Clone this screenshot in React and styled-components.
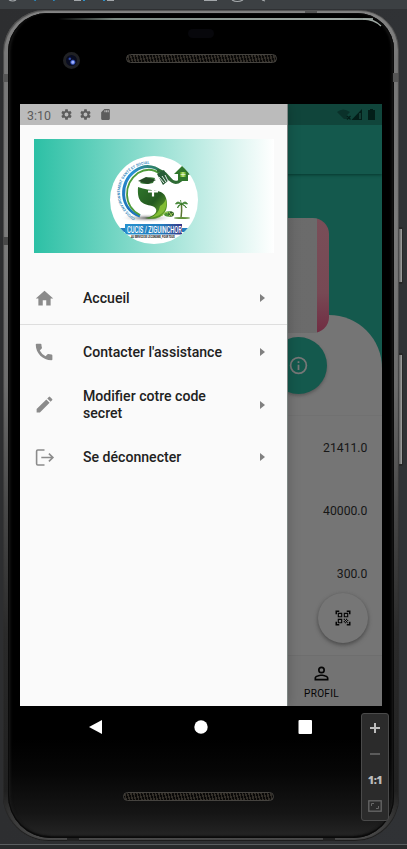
import React from 'react';
import styled, { createGlobalStyle, css } from 'styled-components';

const Global = createGlobalStyle`
  * { box-sizing: border-box; }
  body { margin: 0; background: #303235; font-family: Roboto, sans-serif; }
`;

const Desk = styled.main`
  position: relative;
  width: 407px;
  height: 849px;
  overflow: hidden;
  display: grid;
  grid-template-rows: 9px 835px 5px;
  background: linear-gradient(90deg, #2d2e30, #303235);
`;
const ToolStrip = styled.header`
  background: #3c4043;
  svg { display: block; }
`;
const FootStrip = styled.footer`
  background: #282a2b;
  border-top: 1px solid #5a5e60;
`;
const Stage = styled.div`
  display: flex;
  padding-left: 3px;
`;
const Frame = styled.div`
  width: 396px;
  height: 831px;
  margin-top: 1px;
  padding: 3px 5px 3px 5px;
  border-radius: 42px 40px 44px 46px;
  background: linear-gradient(180deg, #858585 0, #777 6%, #7c7c7c 25%, #6d6d6d 45%, #484848 60%, #2b2b2b 75%, #202020 94%, #4c4c4c 100%);
  box-shadow: inset 1px 1px 1px #30303099, inset 0 -1px 1px #181818, inset -1px 0 1px #30303099;
`;
const Body = styled.div`
  display: grid;
  grid-template-rows: 91px 602px 1fr;
  height: 825px;
  padding: 0 12px;
  border-radius: 39px 37px 41px 43px;
  background: linear-gradient(180deg, #000 0 88%, #060606 92%, #151515 97%, #262626 100%);
  box-shadow: inset 0 0 0 1px #0a0a0a, inset 4px 0 3px -2px #1d1d1d, inset -4px 0 3px -2px #1d1d1d, inset 0 -3px 2px -1px #0a0a0a;
`;
const TopBezel = styled.div`
  position: relative;
  &::before {
    content: '';
    position: absolute;
    top: 5px;
    left: 38px;
    width: 315px;
    height: 2px;
    background: linear-gradient(90deg, transparent, #7e8c85 18%, #a0aaa5 90%, #8a9490);
  }
  > svg { position: absolute; left: 342px; top: 5px; }
`;
const Sensor = styled.i`
  position: absolute;
  left: 168px;
  top: 16px;
  width: 26px;
  height: 9px;
  border-radius: 5px;
  background: #07070b;
`;
const Camera = styled.i`
  position: absolute;
  left: 43px;
  top: 39px;
  width: 17px;
  height: 17px;
  border-radius: 50%;
  border: 3px solid #202124;
  background:
    radial-gradient(circle at 62% 66%, #9fb0ff 0 1px, #3554bd 2px, transparent 3px),
    radial-gradient(circle at 35% 35%, #2d4ab0 0 .6px, transparent 1.8px), #090c20;
`;
const Speaker = styled.i`
  position: absolute;
  left: ${p => p.$x}px;
  top: ${p => p.$y}px;
  width: 151px;
  height: 9px;
  border-radius: 5px;
  border: 1px solid #45433f;
  background: repeating-linear-gradient(75deg, #0a0908 0 1.5px, #332f29 1.5px 3px);
`;
const Screen = styled.section`
  position: relative;
  width: 362px;
  height: 602px;
  overflow: hidden;
  background: #14594d;
`;
const AppBar = styled.div`
  height: 70px;
  border-top: 21px solid #10453b;
  box-shadow: 0 1px 3px #06372d;
`;
const CardZone = styled.div`
  display: flex;
  justify-content: flex-end;
  height: 141px;
  padding: 44px 53px 0 0;
`;
const BankCard = styled.div`
  z-index: 1;
  flex: none;
  width: 245px;
  height: 115px;
  border-radius: 16px;
  background: linear-gradient(90deg, #686868 0, #6b6b6b 233px, transparent 233px), linear-gradient(#794e58, #774954 65%, #712c42);
`;
const Sheet = styled.div`
  height: 391px;
  display: grid;
  grid-template-rows: 100px 190px 50px 51px;
  border-radius: 0 53px 0 0;
  background: #757575;
`;
const InfoButton = styled.div`
  justify-self: start;
  display: grid;
  place-items: center;
  width: 57px;
  height: 57px;
  margin: 22px 0 0 250px;
  border-radius: 50%;
  color: #777;
  background: #14594d;
  box-shadow: 0 2px 3px #4448;
`;
const Amounts = styled.div`
  display: grid;
  grid-auto-rows: 63.3px;
  align-items: center;
  justify-items: end;
  padding-right: 14.6px;
  border-top: 1px solid #717171;
  color: #171717;
  font-size: 12.2px;
`;
const FabZone = styled.div`
  display: flex;
  justify-content: flex-end;
  padding-right: 14px;
`;
const Fab = styled.div`
  display: grid;
  place-items: center;
  width: 50px;
  height: 50px;
  margin-top: -12px;
  border-radius: 50%;
  background: #767676;
  box-shadow: 0 2px 4px #4a4a4a, 0 0 2px #6668;
  color: #050505;
`;
const BottomNav = styled.nav`
  display: flex;
  justify-content: flex-end;
  background: #737373;
  border-top: 1px solid #6e6e6e;
`;
const NavItem = styled.div`
  display: flex;
  flex-direction: column;
  align-items: center;
  width: 121px;
  padding-top: 7px;
  color: #050505;
  font-size: 10px;
  line-height: 13px;
  letter-spacing: .3px;
  svg { margin-bottom: 3px; }
`;
const StatusIcons = styled.div`
  position: absolute;
  left: 316px;
  top: 3px;
`;
const Drawer = styled.aside`
  position: absolute;
  z-index: 2;
  inset: 0 auto 0 0;
  width: 267px;
  background: #fafafa;
  box-shadow: 1px 0 0 #7d8583, 0 0 12px #0004;
`;
const StatusBar = styled.div`
  display: flex;
  align-items: center;
  height: 21px;
  padding: 1px 0 0 7px;
  background: #bbb;
  color: #5c5c5c;
  font-size: 12.4px;
  svg { margin: 0 0 1px 6.5px; }
  svg:first-of-type { margin-left: 9px; }
`;
const Banner = styled.div`
  display: grid;
  place-items: center;
  height: 114px;
  margin: 14px 13px 18px 14px;
  padding-top: 7px;
  background: linear-gradient(90deg, #2cc0a5, #fff);
`;
const MenuRow = styled.div`
  display: grid;
  grid-template-columns: 49px 144px 1fr;
  align-items: center;
  height: 52.8px;
  padding: 0 14px;
  color: #8b8b8b;
  ${p => p.$divided && css`border-bottom: 1px solid #dedede; height: 54.4px; padding-top: 1px;`}
`;
const Label = styled.span`
  color: #212121;
  font-size: 14.1px;
  font-weight: 500;
  line-height: 16.5px;
`;
const Arrow = styled.i`
  justify-self: end;
  margin-right: 8px;
  border: solid transparent;
  border-width: 4.3px 0 4.3px 5px;
  border-left-color: #808080;
`;
const BottomBezel = styled.div`
  position: relative;
  > svg { position: absolute; left: 68px; top: 13px; }
`;
const SideButton = styled.i`
  position: absolute;
  left: 399px;
  top: ${p => p.$y}px;
  width: 4px;
  height: ${p => p.$h}px;
  border: solid #282828;
  border-width: 2px 1px 2px 0;
  border-radius: 0 2px 2px 0;
  background: linear-gradient(90deg, #5b5b5b, #a5a5a5);
`;
const Seam = styled.i`
  position: absolute;
  left: ${p => p.$x}px;
  top: ${p => p.$y}px;
  width: ${p => p.$w}px;
  height: ${p => p.$h}px;
  background: ${p => p.$c || '#555'};
`;
const ZoomPanel = styled.div`
  position: absolute;
  z-index: 3;
  left: 361px;
  top: 713px;
  width: 28px;
  height: 108px;
  display: grid;
  grid-template-rows: 28px 24px 27px 25px;
  place-items: center;
  border: 1px solid #4a4a4a;
  border-radius: 3px;
  background: #2b2b2b;
  color: #bcbcbc;
  font: 800 11px "Open Sans", sans-serif;
  letter-spacing: -.5px;
`;

const paths = {
  home: 'M10 20v-6h4v6h5v-8h3L12 3 2 12h3v8z',
  phone: 'M20 15.5c-1.25 0-2.45-.2-3.57-.57a1.02 1.02 0 0 0-1.02.24l-2.2 2.2a15.07 15.07 0 0 1-6.59-6.59l2.2-2.2a1 1 0 0 0 .25-1.02A11.4 11.4 0 0 1 8.5 4c0-.55-.45-1-1-1H3c-.55 0-1 .45-1 1 0 9.94 8.06 18 18 18 .55 0 1-.45 1-1v-4.5c0-.55-.45-1-1-1z',
  edit: 'M3 17.25V21h3.75L17.81 9.94l-3.75-3.75zM20.71 7.04a1 1 0 0 0 0-1.41l-2.34-2.34a1 1 0 0 0-1.41 0l-1.83 1.83 3.75 3.75z',
  gear: 'M19.14 12.94c.04-.3.06-.61.06-.94s-.02-.64-.07-.94l2.03-1.58a.49.49 0 0 0 .12-.61l-1.92-3.32a.49.49 0 0 0-.59-.22l-2.39.96a7 7 0 0 0-1.62-.94l-.36-2.54a.48.48 0 0 0-.48-.41h-3.84a.48.48 0 0 0-.47.41l-.36 2.54c-.59.24-1.13.57-1.62.94l-2.39-.96a.48.48 0 0 0-.59.22L2.74 8.87a.48.48 0 0 0 .12.61l2.03 1.58A6 6 0 0 0 4.8 12c0 .31.02.64.07.94l-2.03 1.58a.49.49 0 0 0-.12.61l1.92 3.32c.12.22.37.29.59.22l2.39-.96c.5.38 1.03.7 1.62.94l.36 2.54c.05.24.24.41.48.41h3.84c.24 0 .44-.17.47-.41l.36-2.54a7 7 0 0 0 1.62-.94l2.39.96c.22.08.47 0 .59-.22l1.92-3.32a.49.49 0 0 0-.12-.61zM12 15.6A3.6 3.6 0 1 1 12 8.4a3.6 3.6 0 0 1 0 7.2z',
  sd: 'M18 2h-8L4 8v12c0 1.1.9 2 2 2h12c1.1 0 2-.9 2-2V4c0-1.1-.9-2-2-2zm-6 6h-2V4h2zm3 0h-2V4h2zm3 0h-2V4h2z',
  info: 'M11 7h2v2h-2zm0 4h2v6h-2zm1-9a10 10 0 1 0 0 20 10 10 0 0 0 0-20zm0 18a8 8 0 1 1 0-16 8 8 0 0 1 0 16z',
  person: 'M12 5.9a2.1 2.1 0 1 1 0 4.2 2.1 2.1 0 0 1 0-4.2m0 9c2.97 0 6.1 1.46 6.1 2.1v1.1H5.9V17c0-.64 3.13-2.1 6.1-2.1M12 4a4 4 0 1 0 0 8 4 4 0 0 0 0-8zm0 9c-2.67 0-8 1.34-8 4v3h16v-3c0-2.66-5.33-4-8-4z',
  qr: 'M9.5 6.5v3h-3v-3zM11 5H5v6h6zm-1.5 9.5v3h-3v-3zM11 13H5v6h6zm6.5-6.5v3h-3v-3zM19 5h-6v6h6zm-6 8h1.5v1.5H13zm1.5 1.5H16V16h-1.5zM16 13h1.5v1.5H16zm-3 3h1.5v1.5H13zm1.5 1.5H16V19h-1.5zM16 16h1.5v1.5H16zm1.5-1.5H19V16h-1.5zm0 3H19V19h-1.5zM22 7h-2V4h-3V2h5zm0 15v-5h-2v3h-3v2zM2 22h5v-2H4v-3H2zM2 2v5h2V4h3V2z',
};

function Icon({ name, size = 21 }) {
  return <svg width={size} height={size} viewBox="0 0 24 24" fill="currentColor" fillRule="evenodd"><path d={paths[name]} /></svg>;
}
function LogoutIcon() {
  return <svg width="21" height="21" viewBox="0 0 21 21" fill="none" stroke="currentColor" strokeWidth="1.6"><path d="M10.5 3H3.8q-1.2 0-1.2 1.2v12.6q0 1.2 1.2 1.2h6.7M7.3 10.5h11.3M14.9 6.6l4 3.9-4 3.9" /></svg>;
}

function Logo() {
  return (
    <svg width="90" height="90" viewBox="0 0 90 90">
      <defs>
        <linearGradient id="leaf" x2="1" y2="1"><stop stopColor="#2f762b" /><stop offset=".5" stopColor="#245a20" /><stop offset="1" stopColor="#77b82d" /></linearGradient>
        <linearGradient id="ring" x1="1" x2=".1" y2="1"><stop stopColor="#2f7a43" /><stop offset=".45" stopColor="#2a92d6" /><stop offset="1" stopColor="#1c6fb5" /></linearGradient>
        <linearGradient id="plate"><stop stopColor="#2891cf" /><stop offset=".65" stopColor="#227bbb" /><stop offset="1" stopColor="#363485" /></linearGradient>
        <radialGradient id="ground"><stop stopColor="#666" /><stop offset="1" stopColor="#fff" stopOpacity="0" /></radialGradient>
        <clipPath id="disc"><circle cx="45" cy="45" r="44" /></clipPath>
        <path id="orbit" d="M27 64C4 49 8 24 24 14Q35 6 54 9.5" />
      </defs>
      <circle cx="45" cy="45" r="44" fill="#fff" />
      <g clipPath="url(#disc)">
        <ellipse cx="38" cy="63" rx="27" ry="4.5" fill="url(#ground)" />
        <path d="M31 61C10 54 10 27 26 16C37 8 49 12 54 19" fill="none" stroke="url(#ring)" strokeWidth="3" />
        <path d="M31 60C14 51 14 29 29 18Q41 11 51 19" fill="none" stroke="#4f9c3a" strokeWidth="1.8" />
        <path d="M29 32C28 47 33 49 43 51C50 53 49 61 36 63C53 67 61 56 57 43C54 33 42 37 29 32Z" fill="url(#leaf)" />
        <path d="M57 44Q60 60 41 63Q50 59 51 51Q55 49 57 44Z" fill="#82bd35" />
        <path d="M31 28Q36 20 46 23L44 28Q37 30 31 28Z" fill="#367735" />
        <path d="M29 26l8-4 10 3-8 4z" fill="#244b25" />
        <path d="M39 36.500h10M44 31.500v10" stroke="#fff" strokeWidth="2.2" />
        <path d="M48 16C58 14 60 30 69 27Q76 24 74 17" fill="none" stroke="#2f6b35" strokeWidth="3.2" />
        <path d="M48 19l7-4 5 10-6 5z" fill="#285c37" />
        <path d="M50 22l5 6m-2-7l4 6m-1-7l3 6" stroke="#fff" strokeWidth=".9" />
        <path d="M65 19l9-9 8 9-3 1v6h-10v-7z" fill="#2f762b" />
        <path d="M71.5 17h5v5h-5z" fill="#8bc63c" /><path d="M74 17v5M71.5 19.5h5" stroke="#fff" strokeWidth=".6" />
        <ellipse cx="60" cy="59" rx="5" ry="2.8" fill="#4e9735" /><circle cx="62" cy="59" r="2.6" fill="#315b2d" />
        <path d="M53 61q3-5 6-3m1-1l3 4m-3 0l4-3" stroke="#a5d05c" fill="none" />
        <path d="M72 63q1-7 .5-14" fill="none" stroke="#5b7632" strokeWidth="1.5" />
        <path d="M72.5 49q-4-4-6 0q3-1 6 0q-4 1-4 4q2-3 4-4q4-4 6 0q-3-1-6 0q4 1 5 4q-2-3-5-4q-1-3-1-4" fill="#4b9639" stroke="#397a2b" strokeWidth=".8" />
        <ellipse cx="73" cy="63" rx="8" ry="1" fill="#62933c" />
        <path d="M10 73h8v4h-8M70 73h9v4h-9" fill="#247ebd" />
        <rect x="16" y="69" width="57" height="10.5" fill="url(#plate)" />
      </g>
      <text fill="#368bc0" fontFamily="Roboto" fontSize="3.7" fontWeight="700"><textPath href="#orbit" startOffset="1" textLength="77">CUCIS ENVIRONNEMENT SANTÉ ET SOCIAL</textPath></text>
      <text transform="translate(18 77.8) scale(.62 1)" fill="#fff" fontFamily="Roboto" fontSize="9.2" fontWeight="500">CUCIS / ZIGUINCHOR</text>
      <text transform="translate(22 83) scale(.64 1)" fill="#111" fontFamily="Roboto" fontSize="3.6" fontWeight="800">AU SERVICE DE L'ÉCONOMIE, POUR TOUS</text>
    </svg>
  );
}

const menu = [
  { label: 'Accueil', icon: <Icon name="home" />, divided: true },
  { label: "Contacter l'assistance", icon: <Icon name="phone" /> },
  { label: 'Modifier cotre code secret', icon: <Icon name="edit" /> },
  { label: 'Se déconnecter', icon: <LogoutIcon /> },
];

export default function App() {
  return (
    <>
      <Global />
      <Desk>
        <ToolStrip>
          <svg width="407" height="9" fill="none">
            <path d="M9 0q4 2 7 0M74 .5h7M107 .5h7M204 .5h13M232 0q5 3 11 0M262 0l3 1" stroke="#a3a7aa" strokeWidth="1.2" />
            <path d="M34 0l2 .5m17 0l2-.5M83 .5h2M103 .5h2" stroke="#2b91c9" strokeWidth="1.2" />
          </svg>
        </ToolStrip>
        <Stage>
          <Frame>
            <Body>
              <TopBezel>
                <Sensor /><Camera /><Speaker $x={106} $y={41} />
                <svg width="24" height="12" fill="none" stroke="#a0aaa5" strokeWidth="1.3"><path d="M1 1Q12 1 19 8" /></svg>
              </TopBezel>
              <Screen>
                <AppBar />
                <CardZone><BankCard /></CardZone>
                <Sheet>
                  <InfoButton><Icon name="info" /></InfoButton>
                  <Amounts><span>21411.0</span><span>40000.0</span><span>300.0</span></Amounts>
                  <FabZone><Fab><Icon name="qr" size={18} /></Fab></FabZone>
                  <BottomNav><NavItem><Icon name="person" size={21} />PROFIL</NavItem></BottomNav>
                </Sheet>
                <StatusIcons>
                  <svg width="44" height="15" fill="#031e19">
                    <path d="M1 5q6-5 13 0l-3 3v4H8z" opacity=".5" /><path d="M11 9l3.5 3.5m0-3.5L11 12.5" stroke="#031e19" strokeWidth="1.2" />
                    <path d="M15.500 13L26 2v11z" /><path d="M24 6v6" stroke="#24594e" />
                    <path d="M32 3h2V2h3v1h2v10h-7z" />
                  </svg>
                </StatusIcons>
                <Drawer>
                  <StatusBar>3:10 <Icon name="gear" size={13} /><Icon name="gear" size={13} /><Icon name="sd" size={13} /></StatusBar>
                  <Banner><Logo /></Banner>
                  {menu.map(item => (
                    <MenuRow key={item.label} $divided={item.divided}>{item.icon}<Label>{item.label}</Label><Arrow /></MenuRow>
                  ))}
                </Drawer>
              </Screen>
              <BottomBezel>
                <svg width="226" height="16" fill="#fff"><path d="M1 8L14 1v14z" /><circle cx="113" cy="8" r="6.7" /><rect x="210.5" y="1" width="13.5" height="14" rx="1" /></svg>
                <Speaker $x={103} $y={86} />
              </BottomBezel>
            </Body>
          </Frame>
        </Stage>
        <FootStrip />
        <Seam $x={3} $y={74} $w={5} $h={8} /><Seam $x={393} $y={73} $w={5} $h={9} />
        <Seam $x={305} $y={10} $w={12} $h={3} /><Seam $x={3} $y={237} $w={5} $h={8} $c="#484848" />
        <Seam $x={67} $y={838} $w={12} $h={3} $c="#222" /><Seam $x={323} $y={838} $w={12} $h={3} $c="#222" />
        <SideButton $y={227} $h={57} /><SideButton $y={353} $h={113} />
        <ZoomPanel>
          <svg width="12" height="12" stroke="#bcbcbc" strokeWidth="2"><path d="M1 6h10M6 1v10" /></svg>
          <svg width="12" height="4" stroke="#5b5b5b" strokeWidth="2"><path d="M1 2h10" /></svg>
          <span>1:1</span>
          <svg width="14" height="12" fill="none" stroke="#686868"><rect x=".8" y=".8" width="12.4" height="10.4" strokeWidth="1.3" /><path d="M3.5 6V3.5H6M8 8.5h2.5V6" /></svg>
        </ZoomPanel>
      </Desk>
    </>
  );
}
